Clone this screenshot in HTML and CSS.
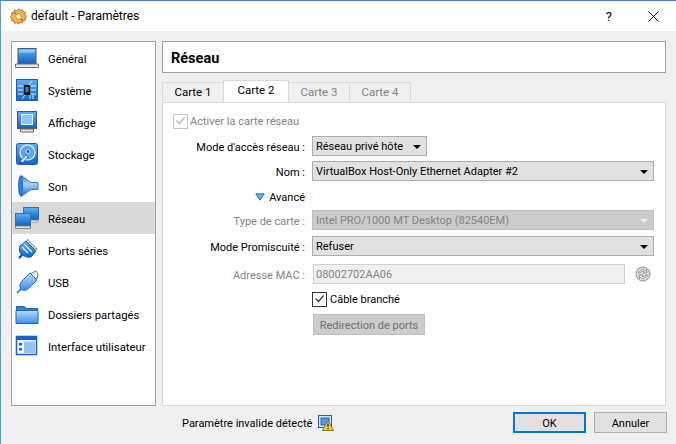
FILE: index.html
```html
<!DOCTYPE html>
<html lang="fr">
<head>
  <meta charset="UTF-8">
  <title>default - Paramètres</title>
  <link rel="stylesheet" href="styles.css">
</head>
<body>

<svg class="defs" width="0" height="0">
  <defs>
    <linearGradient id="blue" x1="0" y1="0" x2="0" y2="1">
      <stop offset="0" stop-color="#5fb0f2"/>
      <stop offset="1" stop-color="#0e63c9"/>
    </linearGradient>
    <linearGradient id="sky" x1="0" y1="0" x2="0" y2="1">
      <stop offset="0" stop-color="#b9dcf8"/>
      <stop offset="1" stop-color="#3b92e6"/>
    </linearGradient>
    <linearGradient id="horn" x1="0" y1="0" x2="0" y2="1">
      <stop offset="0" stop-color="#2f80d8"/>
      <stop offset="0.4" stop-color="#a9d2f6"/>
      <stop offset="1" stop-color="#1b6cc8"/>
    </linearGradient>
  </defs>
</svg>

<div class="window">
  <div class="titlebar">
    <svg class="app-icon" width="17" height="17" viewBox="0 0 16 16">
      <path d="M8 .8l1.600 1.400 2-.6.8 1.900 2 .5-.2 2.100 1.400 1.600-1.400 1.600.2 2.100-2 .5-.8 1.900-2-.6L8 15.200l-1.600-1.400-2 .6-.8-1.900-2-.5.2-2.100L.4 8l1.400-1.600-.2-2.100 2-.5.8-1.900 2 .6z" fill="#f3b64c" stroke="#7a5520" stroke-width=".7"/>
      <circle cx="8" cy="8" r="2.600" fill="#fff0c4" stroke="#a8762c" stroke-width=".7"/>
      <circle cx="4.600" cy="5" r=".9" fill="#a9651c"/>
      <circle cx="11.200" cy="11" r=".9" fill="#a9651c"/>
    </svg>
    <span class="title">default - Paramètres</span>
    <span class="title-help">?</span>
    <svg class="title-close" width="11" height="11" viewBox="0 0 11 11">
      <path d="M.5.5l10 10M10.500.5l-10 10" stroke="#111" fill="none"/>
    </svg>
  </div>

  <div class="content">
    <ul class="sidebar">
      <li class="nav-item">
        <svg width="24" height="24" viewBox="0 0 24 24">
          <rect x="3" y="2.500" width="18" height="15" fill="url(#blue)" stroke="#4a5a6a"/>
          <path d="M4 3.500h16v3H4z" fill="#8cc6f5"/>
          <path d="M.5 18h23v3.500H.5z" fill="#e8e8e8" stroke="#6b6b6b"/>
        </svg>
        <span>Général</span>
      </li>
      <li class="nav-item">
        <svg width="24" height="24" viewBox="0 0 24 24">
          <rect x="1.500" y="1.500" width="21" height="21" fill="url(#blue)" stroke="#1a5fb0"/>
          <path d="M3 8h5M3 12h5M3 16h5M16 8h5M16 12h5M16 16h5M17 3l-3 4M7 21l3-4M15 21v-4M18 21v-4" stroke="#e4f2ff"/>
          <rect x="9" y="7" width="6" height="10" fill="#1c1c1c"/>
          <rect x="10.500" y="9" width="3" height="5" fill="#777"/>
        </svg>
        <span>Système</span>
      </li>
      <li class="nav-item">
        <svg width="24" height="24" viewBox="0 0 24 24">
          <rect x="2.500" y="1.500" width="19" height="17" fill="url(#blue)" stroke="#4a5a6a"/>
          <rect x="6.500" y="4.500" width="11" height="10" fill="#8cc6f5" stroke="#fff"/>
          <path d="M5.500 19h13v3h-13z" fill="#e3e3e3" stroke="#666"/>
        </svg>
        <span>Affichage</span>
      </li>
      <li class="nav-item">
        <svg width="24" height="24" viewBox="0 0 24 24">
          <rect x="1.500" y="1.500" width="21" height="21" rx="2" fill="url(#blue)" stroke="#1a5fb0"/>
          <circle cx="12.500" cy="10.500" r="7.500" fill="#5ba6ec" stroke="#fff" stroke-width="1.200"/>
          <circle cx="13" cy="9.500" r="1.800" fill="#0f4f9e" stroke="#fff" stroke-width=".7"/>
          <path d="M5 19.500l6-6.500 2 2-5 5.500z" fill="#eaf4fd" stroke="#1a5fb0" stroke-width=".8"/>
        </svg>
        <span>Stockage</span>
      </li>
      <li class="nav-item">
        <svg width="24" height="24" viewBox="0 0 24 24">
          <path d="M6 1.500l10 7h7v7h-7l-10 7z" fill="url(#horn)" stroke="#1c64b8" stroke-width=".8"/>
          <ellipse cx="5.500" cy="12" rx="2" ry="10" fill="#2f80d8" stroke="#1c64b8" stroke-width=".8"/>
        </svg>
        <span>Son</span>
      </li>
      <li class="nav-item selected">
        <svg width="24" height="24" viewBox="0 0 24 24">
          <rect x="8.500" y="1.500" width="15" height="12" fill="url(#blue)" stroke="#3f6d9f"/>
          <path d="M9 14.500h14v2H9z" fill="#dfe6ee" stroke="#7c8a98" stroke-width=".6"/>
          <rect x=".5" y="7.500" width="15" height="12" fill="url(#blue)" stroke="#3f6d9f"/>
          <path d="M.5 20h15v2.500H.5z" fill="#e6e6e6" stroke="#6e6e6e" stroke-width=".8"/>
        </svg>
        <span>Réseau</span>
      </li>
      <li class="nav-item">
        <svg width="24" height="24" viewBox="0 0 24 24">
          <path d="M11 3l10 10-5 6c-3 1-8-1-10-3s-2-6-1-8z" fill="url(#blue)" stroke="#1d5ea8"/>
          <path d="M9 6l8 8M7 9l6 6" stroke="#d9ecfc" stroke-width="1.500"/>
          <path d="M12 1.500l10 10" stroke="#8a8f96" stroke-width="2" stroke-dasharray="2 1"/>
          <path d="M7 17l-3 3" stroke="#123f78" stroke-width="2"/>
        </svg>
        <span>Ports séries</span>
      </li>
      <li class="nav-item">
        <svg width="24" height="24" viewBox="0 0 24 24">
          <path d="M15.500 3.500L21 1l2 3-1 5-3 1z" fill="#eee" stroke="#555" stroke-width=".8"/>
          <path d="M15 3l7 7-8 8c-3 3-6 3-8 1s-1-6 1-8z" fill="url(#sky)" stroke="#1c64b8"/>
          <path d="M6 19l-4 4" stroke="#1c64b8" stroke-width="1.500"/>
        </svg>
        <span>USB</span>
      </li>
      <li class="nav-item">
        <svg width="24" height="24" viewBox="0 0 24 24">
          <path d="M1.500 6V4.500h8l2 2h11V21.500h-21z" fill="#2b82dc" stroke="#1c64b8"/>
          <path d="M1 8.500h22v13H1z" fill="url(#sky)" stroke="#1c64b8"/>
        </svg>
        <span>Dossiers partagés</span>
      </li>
      <li class="nav-item">
        <svg width="24" height="24" viewBox="0 0 24 24">
          <rect x="1.500" y="2.500" width="20" height="18" fill="#fff" stroke="#1c64c4" stroke-width="1.600"/>
          <path d="M2 3h19v3H2z" fill="#1c64c4"/>
          <rect x="9" y="7.500" width="11" height="11.500" fill="#94c4f4"/>
          <path d="M4 9h3v2.500H4zM4 14h3v2.500H4z" fill="#1c64c4"/>
        </svg>
        <span>Interface utilisateur</span>
      </li>
    </ul>

    <div class="main">
      <div class="page-header">Réseau</div>

      <div class="tabs">
        <div class="tab">Carte 1</div>
        <div class="tab active">Carte 2</div>
        <div class="tab off">Carte 3</div>
        <div class="tab off">Carte 4</div>
      </div>

      <div class="panel">
        <div class="check-row off-text">
          <span class="checkbox disabled">
            <svg width="13" height="13" viewBox="0 0 13 13"><path d="M2.500 6.500l3 3 5-6" fill="none" stroke="#b5b5b5" stroke-width="1.200"/></svg>
          </span>
          Activer la carte réseau
        </div>

        <div class="form-row row-mode">
          <label>Mode d'accès réseau :</label>
          <div class="combo short">Réseau privé hôte<i class="arrow"></i></div>
        </div>
        <div class="form-row row-name">
          <label>Nom :</label>
          <div class="combo">VirtualBox Host-Only Ethernet Adapter #2<i class="arrow"></i></div>
        </div>
        <div class="form-row row-adv">
          <label class="adv-label">
            <svg width="10" height="8" viewBox="0 0 10 8"><path d="M.8.8h8.400L5 7.200z" fill="#62b6f0" stroke="#1b72c4"/></svg>
            Avancé
          </label>
        </div>
        <div class="form-row row-type off-text">
          <label>Type de carte :</label>
          <div class="combo disabled">Intel PRO/1000 MT Desktop (82540EM)<i class="arrow"></i></div>
        </div>
        <div class="form-row row-promisc">
          <label>Mode Promiscuité :</label>
          <div class="combo">Refuser<i class="arrow"></i></div>
        </div>
        <div class="form-row row-mac off-text">
          <label>Adresse MAC :</label>
          <div class="mac-input">08002702AA06</div>
          <svg class="mac-refresh" width="16" height="16" viewBox="0 0 16 16">
            <circle cx="8" cy="8" r="7" fill="#dcdcdc" stroke="#8c8c8c"/>
            <path d="M3.500 7c.8-3 4.500-4.200 7-2.500l1-1V7H8l1.200-1.200C7.500 4.800 5.500 5.500 5 7zM12.500 9c-.8 3-4.500 4.200-7 2.500l-1 1V9H8l-1.200 1.200c1.700 1 3.700.3 4.200-1.200z" fill="#f5f5f5" stroke="#777" stroke-width=".7"/>
          </svg>
        </div>
        <div class="form-row row-cable">
          <label></label>
          <div class="cable">
            <span class="checkbox">
              <svg width="13" height="13" viewBox="0 0 13 13"><path d="M2.500 6.500l3 3 5-6" fill="none" stroke="#333" stroke-width="1.200"/></svg>
            </span>
            Câble branché
          </div>
        </div>
        <div class="form-row row-ports">
          <label></label>
          <div class="btn-ports">Redirection de ports</div>
        </div>
      </div>
    </div>
  </div>

  <div class="footer">
    <span class="warn-text">Paramètre invalide détecté</span>
    <svg class="warn-icon" width="16" height="16" viewBox="0 0 16 16">
      <rect x=".5" y=".5" width="13" height="12" fill="#cfe4fa" stroke="#1c64c4"/>
      <rect x="3" y="3" width="8" height="7" fill="#4f9fe8" stroke="#123f78" stroke-width=".7"/>
      <path d="M10 5.500l5.700 10H4.300z" fill="#f8c93a" stroke="#8a5a10" stroke-width=".8"/>
      <path d="M10 8.500v3.500M10 13v1.300" stroke="#222" stroke-width="1.200"/>
    </svg>
    <div class="btn primary">OK</div>
    <div class="btn">Annuler</div>
  </div>
</div>

</body>
</html>
```

FILE: styles.css
```css
:root {
  --bg-color: #f0f0f0;
  --text-color: #000;
  --muted-color: #838383;
  --line-color: #a0a0a0;
  --combo-color: #e1e1e1;
}

html, body {
  margin: 0;
  padding: 0;
}

body {
  background-color: var(--bg-color);
  color: var(--text-color);
  font-family: Roboto, "Open Sans", sans-serif;
  font-size: 11px;
}

.defs {
  position: absolute;
}

.window {
  width: 676px;
  height: 444px;
  box-sizing: border-box;
  border-top: 1px solid #3f86c4;
  border-left: 1px solid #5a9bd0;
  overflow: hidden;
}

.titlebar {
  display: flex;
  align-items: center;
  height: 30px;
  background-color: #fff;
  padding-left: 9px;
  font-size: 12px;
}

.app-icon {
  margin-right: 4px;
}

.title {
  flex: 1;
}

.title-help {
  margin-right: 36px;
  font-size: 13px;
}

.title-close {
  margin-right: 17px;
}

.content {
  display: flex;
  gap: 6px;
  padding: 10px 10px 0 10px;
}

.sidebar {
  list-style: none;
  margin: 0;
  padding: 0;
  width: 143px;
  height: 363px;
  background-color: #fff;
  border: 1px solid var(--line-color);
}

.nav-item {
  display: flex;
  align-items: center;
  height: 32px;
  padding-left: 3px;
  gap: 9px;
  font-size: 11.300px;
}

.nav-item span {
  padding-top: 2px;
}

.nav-item.selected {
  background-color: #d9d9d9;
}

.main {
  flex: 1;
}

.page-header {
  height: 30px;
  line-height: 33px;
  padding-left: 8px;
  background-color: #fff;
  border: 1px solid var(--line-color);
  font-size: 14.500px;
  font-weight: 700;
}

.tabs {
  display: flex;
  align-items: flex-end;
  height: 29px;
  padding-left: 1px;
  font-size: 11.500px;
}

.tab {
  height: 19px;
  line-height: 19px;
  width: 60px;
  text-align: center;
  border: 1px solid #d9d9d9;
  border-bottom: none;
  margin-left: -1px;
  background-color: var(--bg-color);
}

.tab.active {
  height: 21px;
  width: 64px;
  margin-top: -2px;
  background-color: #fff;
  position: relative;
  z-index: 1;
}

.tab.off {
  color: var(--muted-color);
}

.panel {
  height: 304px;
  box-sizing: border-box;
  background-color: #fff;
  border: 1px solid #d9d9d9;
  padding-top: 10px;
}

.check-row {
  display: flex;
  align-items: center;
  gap: 1px;
  height: 16px;
  padding-left: 10px;
}

.off-text {
  color: var(--muted-color);
}

.checkbox {
  display: inline-block;
  width: 13px;
  height: 13px;
  background-color: #fff;
  border: 1px solid #333;
  flex: none;
  line-height: 0;
  margin-right: 1px;
}

.checkbox svg {
  display: block;
  margin: -0.5px;
}

.checkbox.disabled {
  border-color: #c4c4c4;
}

.form-row {
  display: flex;
  align-items: center;
}

.form-row label {
  width: 142px;
  text-align: right;
  margin-right: 7px;
  flex: none;
  padding-top: 2px;
}

.row-mode { margin-top: 7px; }
.row-name { margin-top: 5px; }
.row-adv { margin-top: 5px; height: 20px; }
.row-type { margin-top: 4px; }
.row-promisc { margin-top: 6px; }
.row-mac { margin-top: 8px; }
.row-cable { margin-top: 8px; }
.row-ports { margin-top: 8px; }

.adv-label {
  display: flex;
  justify-content: flex-end;
  align-items: center;
  gap: 4px;
}

.combo {
  display: flex;
  align-items: center;
  justify-content: space-between;
  box-sizing: border-box;
  width: 342px;
  height: 20px;
  padding: 1px 5px 0 3px;
  background-color: var(--combo-color);
  border: 1px solid #adadad;
}

.combo.short {
  width: 115px;
}

.combo.disabled {
  background-color: #cccccc;
  border-color: #bfbfbf;
}

.arrow {
  width: 0;
  height: 0;
  border-left: 4px solid transparent;
  border-right: 4px solid transparent;
  border-top: 4px solid #000;
}

.combo.disabled .arrow {
  border-top-color: #efefef;
}

.mac-input {
  box-sizing: border-box;
  width: 312px;
  height: 20px;
  line-height: 20px;
  margin-left: 1px;
  padding-left: 2px;
  background-color: var(--bg-color);
  border: 1px solid #cfcfcf;
}

.mac-refresh {
  margin-left: 10px;
}

.cable {
  display: flex;
  align-items: center;
  gap: 2px;
  height: 14px;
}

.btn-ports {
  box-sizing: border-box;
  width: 112px;
  height: 21px;
  line-height: 22px;
  margin-left: 1px;
  text-align: center;
  color: #6f6f6f;
  background-color: #cccccc;
  border: 1px solid #bfbfbf;
}

.footer {
  display: flex;
  align-items: center;
  height: 21px;
  margin-top: 6px;
  padding-left: 181px;
}

.warn-text {
  padding-top: 2px;
}

.warn-icon {
  margin-left: 6px;
}

.btn {
  box-sizing: border-box;
  width: 73px;
  height: 21px;
  line-height: 22px;
  text-align: center;
  background-color: var(--combo-color);
  border: 1px solid #adadad;
  margin-left: 8px;
}

.btn.primary {
  margin-left: auto;
  border: 2px solid #0078d7;
  line-height: 20px;
}

.footer .btn:last-child {
  margin-right: 9px;
}
```
